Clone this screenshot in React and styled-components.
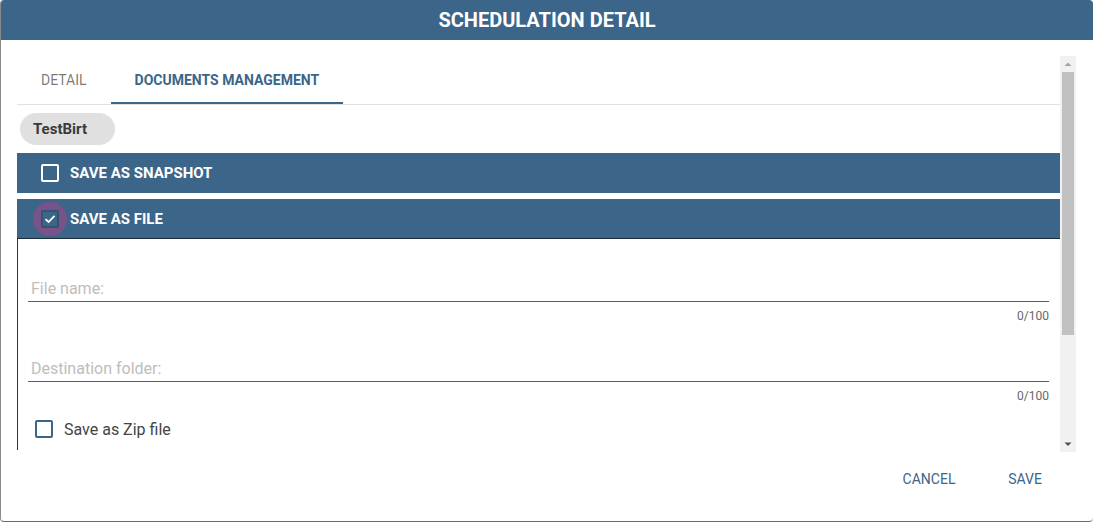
import React from 'react';
import styled, { createGlobalStyle } from 'styled-components';

const GlobalStyle = createGlobalStyle`
    html, body {
        margin: 0;
        padding: 0;
        background: #ffffff;
        font-family: Roboto, "Liberation Sans", Arial, sans-serif;
    }
`;

const Dialog = styled.div`
    width: 1093px;
    height: 522px;
    box-sizing: border-box;
    border-left: 1px solid #8a8a8a;
    border-bottom: 1px solid #6d6d6d;
    border-radius: 4px;
    overflow: hidden;
    display: flex;
    flex-direction: column;
    background: #fff;
`;
const Header = styled.div`
    height: 40px;
    flex-shrink: 0;
    background: #3b6589;
    color: #fff;
    display: flex;
    align-items: center;
    justify-content: center;
    font-size: 20px;
    font-weight: 700;
    text-transform: uppercase;
`;
const ScrollArea = styled.div`
    margin: 16px 17px 0 16px;
    height: 396px;
    display: flex;
`;
const Content = styled.div`
    flex: 1;
    min-width: 0;
    overflow: hidden;
`;
const ScrollBar = styled.div`
    width: 16px;
    flex-shrink: 0;
    background: #f1f1f1;
    display: flex;
    flex-direction: column;
`;
const ScrollButton = styled.div`
    height: 16px;
    display: flex;
    align-items: center;
    justify-content: center;
`;
const Track = styled.div`
    flex: 1;
    padding: 0 2px;
`;
const Thumb = styled.div`
    height: 263px;
    background: #c1c1c1;
`;
const Arrow = ({ up }) => (
    <svg width="16" height="16" viewBox="0 0 16 16">
        {up
            ? <path d="M4.5 10 L8 6.5 L11.5 10Z" fill="#a3a3a3" />
            : <path d="M4.5 6.5 L8 10 L11.5 6.5Z" fill="#505050" />}
    </svg>
);

const TabBar = styled.div`
    display: flex;
    height: 48px;
    border-bottom: 1px solid #e1e1e1;
`;
const Tab = styled.div`
    padding: 0 24px;
    display: flex;
    align-items: center;
    font-size: 14px;
    text-transform: uppercase;
    font-weight: ${p => p.active ? 700 : 400};
    color: ${p => p.active ? '#3b6589' : 'rgba(0,0,0,0.54)'};
    box-shadow: ${p => p.active ? 'inset 0 -2px 0 #3b6589' : 'none'};
`;
const ChipRow = styled.div`
    padding: 8px 3px;
    display: flex;
`;
const Chip = styled.span`
    height: 32px;
    line-height: 32px;
    border-radius: 16px;
    background: #e0e0e0;
    color: #3a3a3a;
    font-size: 15px;
    font-weight: 700;
    padding: 0 28px 0 13px;
`;
const Panel = styled.div`
    margin-bottom: 6px;
`;
const PanelHead = styled.div`
    height: 40px;
    box-sizing: border-box;
    background: #3b6589;
    color: #fff;
    display: flex;
    align-items: center;
    gap: 11px;
    padding-left: 24px;
    font-size: 15px;
    font-weight: 700;
    text-transform: uppercase;
    border-bottom: ${p => p.open ? '1px solid #1c2b38' : 'none'};
`;
const BoxWrap = styled.span`
    position: relative;
    width: 18px;
    height: 18px;
    display: inline-flex;
`;
const Ripple = styled.span`
    position: absolute;
    left: -8px;
    top: -8px;
    width: 34px;
    height: 34px;
    border-radius: 50%;
    background: rgba(200, 60, 140, 0.45);
`;
const Box = styled.span`
    position: relative;
    box-sizing: border-box;
    width: 18px;
    height: 18px;
    border: 2px solid ${p => p.color};
    border-radius: 2px;
    display: flex;
    align-items: center;
    justify-content: center;
    background: ${p => p.checked ? '#3b6589' : 'transparent'};
`;
const PanelBody = styled.div`
    border-left: 1px solid #333;
    padding: 12px 11px 10px 10px;
`;
const Field = styled.div`
    padding-top: 24px;
`;
const Input = styled.div`
    border-bottom: 1px solid #3b6589;
    padding: 4px 3px 2px;
    font-size: 16px;
    color: #bdbdbd;
    line-height: 20px;
`;
const Counter = styled.div`
    text-align: right;
    font-size: 12px;
    color: #666;
    padding: 6px 0 7px;
    line-height: 16px;
`;
const ZipRow = styled.label`
    display: flex;
    align-items: center;
    gap: 11px;
    padding: 7px 0 0 7px;
    font-size: 16px;
    color: #444;
    height: 22px;
`;

const Check = () => (
    <svg width="14" height="14" viewBox="0 0 14 14">
        <path d="M2.5 7.2 L5.6 10 L11.5 3.8" stroke="#fff" strokeWidth="1.8" fill="none" />
    </svg>
);

const Footer = styled.div`
    display: flex;
    justify-content: flex-end;
    padding: 9px 16px 0 0;
`;
const Button = styled.button`
    min-width: 88px;
    height: 36px;
    margin: 0 8px 0 0;
    padding: 0 6px;
    border: none;
    background: transparent;
    color: #3b6589;
    font-family: Roboto, "Liberation Sans", Arial, sans-serif;
    font-size: 14px;
    text-transform: uppercase;
    cursor: pointer;
`;

const App = () => (
    <Dialog>
        <GlobalStyle />
        <Header>Schedulation Detail</Header>
        <ScrollArea>
            <Content>
                <TabBar>
                    <Tab>Detail</Tab>
                    <Tab active>Documents Management</Tab>
                </TabBar>
                <ChipRow><Chip>TestBirt</Chip></ChipRow>
                <Panel>
                    <PanelHead>
                        <BoxWrap><Box color="#fff" /></BoxWrap>
                        Save as snapshot
                    </PanelHead>
                </Panel>
                <Panel>
                    <PanelHead open>
                        <BoxWrap>
                            <Ripple />
                            <Box color="#2f5474" checked><Check /></Box>
                        </BoxWrap>
                        Save as file
                    </PanelHead>
                    <PanelBody>
                        <Field>
                            <Input>File name:</Input>
                            <Counter>0/100</Counter>
                        </Field>
                        <Field>
                            <Input>Destination folder:</Input>
                            <Counter>0/100</Counter>
                        </Field>
                        <ZipRow>
                            <Box color="#3b6589" />
                            Save as Zip file
                        </ZipRow>
                    </PanelBody>
                </Panel>
            </Content>
            <ScrollBar>
                <ScrollButton><Arrow up /></ScrollButton>
                <Track><Thumb /></Track>
                <ScrollButton><Arrow /></ScrollButton>
            </ScrollBar>
        </ScrollArea>
        <Footer>
            <Button>Cancel</Button>
            <Button>Save</Button>
        </Footer>
    </Dialog>
);

export default App;
